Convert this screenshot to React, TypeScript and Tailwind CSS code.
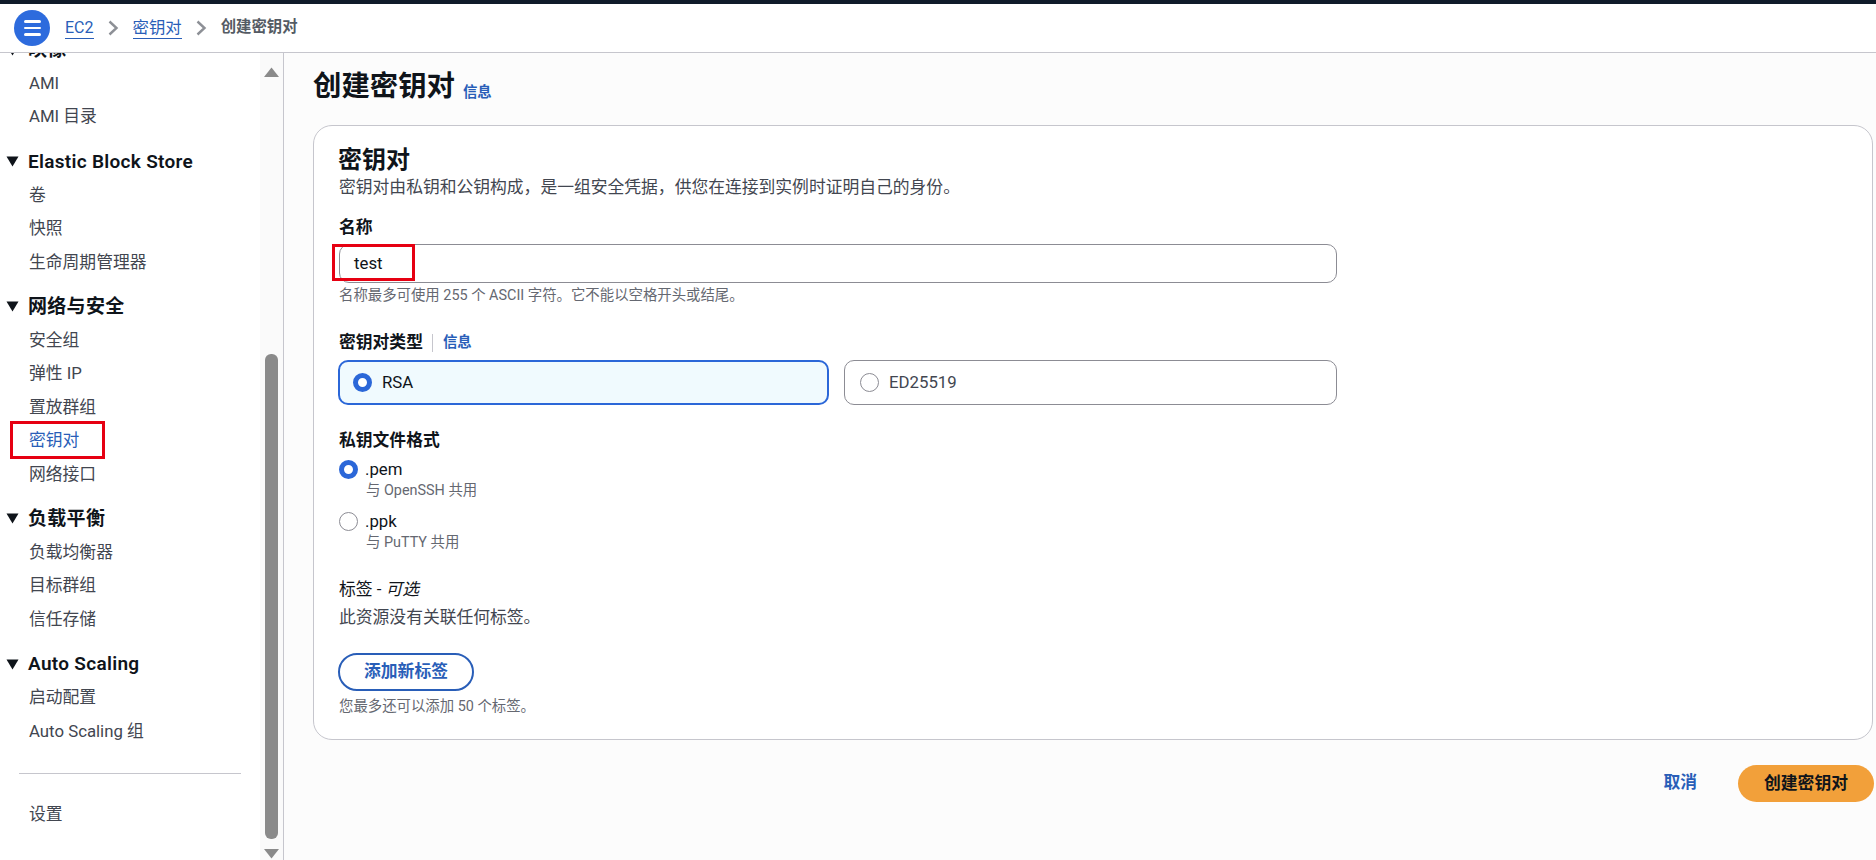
const FONT = "font-['Roboto','Noto_Sans_CJK_SC',sans-serif]";

type NavGroup = { title?: string; items: string[] };

const NAV_GROUPS: NavGroup[] = [
  { title: "Elastic Block Store", items: ["卷", "快照", "生命周期管理器"] },
  { title: "网络与安全", items: ["安全组", "弹性 IP", "置放群组", "密钥对", "网络接口"] },
  { title: "负载平衡", items: ["负载均衡器", "目标群组", "信任存储"] },
  { title: "Auto Scaling", items: ["启动配置", "Auto Scaling 组"] },
];

function Caret() {
  return (
    <svg width="13" height="11" viewBox="0 0 13 11" className="shrink-0 text-[#0f141a]">
      <path d="M0.5 0.5h12L6.5 10.5z" fill="currentColor" />
    </svg>
  );
}

function Chevron() {
  return (
    <svg width="12" height="18" viewBox="0 0 12 18" className="shrink-0 text-[#8d9096]">
      <path d="M2.5 2.5l7 6.5-7 6.5" fill="none" stroke="currentColor" strokeWidth="2.4" />
    </svg>
  );
}

function NavItem({ label }: { label: string }) {
  const active = label === "密钥对";
  return (
    <li className={`relative flex h-[33.4px] items-center pl-[29px] text-[16.8px] ${active ? "text-[#295eb8]" : "text-[#424650]"}`}>
      {label}
      {active && <span className="absolute left-[10px] top-[-3px] h-[38px] w-[95px] border-[3px] border-[#e60012]" />}
    </li>
  );
}

function Sidebar() {
  return (
    <aside className="flex h-full w-[284px] shrink-0 border-r border-[#c6c6cd] bg-white">
      <nav className="h-full w-[260px] shrink-0 overflow-hidden">
        <div className="-mt-[19px]">
          <div className="flex h-[33px] items-center gap-[9px] pl-[6px] text-[19px] font-semibold tracking-[0.3px] text-[#0f141a]">
            <Caret />
            映像
          </div>
          <ul>
            <NavItem label="AMI" />
            <NavItem label="AMI 目录" />
          </ul>
          {NAV_GROUPS.map((group) => (
            <div key={group.title} className="mt-[11px]">
              <div className="flex h-[34px] items-center gap-[9px] pl-[6px] text-[19px] font-semibold tracking-[0.3px] text-[#0f141a]">
                <Caret />
                {group.title}
              </div>
              <ul>
                {group.items.map((item) => (
                  <NavItem key={item} label={item} />
                ))}
              </ul>
            </div>
          ))}
          <div className="ml-[19px] mt-[25px] h-px w-[222px] bg-[#c6c6cd]" />
          <div className="mt-[24px] pl-[29px] text-[16.8px] leading-[33px] text-[#424650]">设置</div>
        </div>
      </nav>
      <div className="flex h-full w-[23px] flex-col items-center bg-[#fafafa]">
        <svg width="15" height="10" viewBox="0 0 15 10" className="mt-[14px] text-[#8a8a8a]">
          <path d="M7.5 0.5L15 10H0z" fill="currentColor" />
        </svg>
        <div className="mt-[277px] h-[485px] w-[13px] rounded-[6px] bg-[#8a8a8a]" />
        <svg width="15" height="10" viewBox="0 0 15 10" className="mt-[10px] text-[#8a8a8a]">
          <path d="M0 0h15L7.5 9.5z" fill="currentColor" />
        </svg>
      </div>
    </aside>
  );
}

function Radio({ checked }: { checked?: boolean }) {
  return (
    <span
      className={`block h-[19px] w-[19px] shrink-0 rounded-full bg-white ${
        checked ? "border-[5px] border-[#2b67d8]" : "border-[1.5px] border-[#8c8c94]"
      }`}
    />
  );
}

function Header() {
  return (
    <header className="flex h-[49px] shrink-0 items-center border-b border-[#c6c6cd] bg-white pl-[14px]">
      <button type="button" className="flex h-9 w-9 flex-col items-center justify-center gap-[4px] rounded-full bg-[#2d6bdd]">
        <span className="h-[2.5px] w-[17px] rounded bg-white" />
        <span className="h-[2.5px] w-[17px] rounded bg-white" />
        <span className="h-[2.5px] w-[17px] rounded bg-white" />
      </button>
      <a className="ml-[15px] border-b border-[#295eb8] text-[16px] leading-[21px] text-[#295eb8]">EC2</a>
      <span className="ml-[13px] mr-[14px]"><Chevron /></span>
      <a className="border-b border-[#295eb8] text-[16.4px] leading-[21px] text-[#295eb8]">密钥对</a>
      <span className="ml-[13px] mr-[14px]"><Chevron /></span>
      <span className="text-[15.4px] font-semibold text-[#545b64]">创建密钥对</span>
    </header>
  );
}

function KeyForm() {
  return (
    <section className="mt-[12px] h-[615px] w-[1560px] rounded-[19px] border border-[#c6c6cd] bg-white pl-[25px] pt-[20px]">
      <h2 className="ml-[-1px] text-[24px] font-bold leading-[28px] text-[#0f141a]">密钥对</h2>
      <p className="mt-[2px] text-[16.8px] leading-[22px] text-[#424650]">密钥对由私钥和公钥构成，是一组安全凭据，供您在连接到实例时证明自己的身份。</p>

      <label className="mt-[18px] block text-[16.8px] font-semibold leading-[22px] text-[#0f141a]">名称</label>
      <div className="relative mt-[6px] h-[39px] w-[998px]">
        <div className="flex h-full items-center rounded-[10px] border border-[#8c8c94] bg-white pl-[14px] text-[16.8px] text-[#0f141a]">test</div>
        <span className="absolute left-[-7px] top-0 h-[37px] w-[83px] border-[3px] border-[#e60012]" />
      </div>
      <p className="mt-[3px] text-[14.4px] leading-[20px] text-[#656871]">名称最多可使用 255 个 ASCII 字符。它不能以空格开头或结尾。</p>

      <div className="mt-[26px] flex h-[22px] items-center text-[14.4px]">
        <span className="text-[16.8px] font-semibold text-[#0f141a]">密钥对类型</span>
        <span className="ml-[9px] h-[18px] w-px bg-[#c6c6cd]" />
        <a className="ml-[10px] font-semibold text-[#295eb8]">信息</a>
      </div>
      <div className="ml-[-1px] mt-[6px] flex w-[999px] gap-[15px]">
        <div className="flex h-[45px] w-[491px] items-center gap-[10px] rounded-[10px] border-[2px] border-[#2b67d8] bg-[#f0fafe] pl-[13px] text-[16.8px] text-[#0f141a]">
          <Radio checked />
          RSA
        </div>
        <div className="flex h-[45px] flex-1 items-center gap-[10px] rounded-[10px] border border-[#8c8c94] bg-white pl-[15px] text-[16.8px] text-[#424650]">
          <Radio />
          ED25519
        </div>
      </div>

      <div className="mt-[24px] text-[16.8px] font-semibold leading-[22px] text-[#0f141a]">私钥文件格式</div>
      <div className="mt-[7px] flex items-center gap-[7px] text-[16.8px] leading-[22px] text-[#0f141a]">
        <Radio checked />
        .pem
      </div>
      <div className="pl-[27px] text-[14.4px] leading-[21px] text-[#656871]">与 OpenSSH 共用</div>
      <div className="mt-[9px] flex items-center gap-[7px] text-[16.8px] leading-[22px] text-[#0f141a]">
        <Radio />
        .ppk
      </div>
      <div className="pl-[27px] text-[14.4px] leading-[21px] text-[#656871]">与 PuTTY 共用</div>

      <div className="mt-[25px] text-[16.8px] leading-[22px] text-[#0f141a]">标签 - <i>可选</i></div>
      <p className="mt-[6px] text-[16.8px] leading-[22px] text-[#424650]">此资源没有关联任何标签。</p>
      <button type="button" className="ml-[-1px] mt-[25px] flex h-[38px] w-[136px] items-center justify-center rounded-full border-[2px] border-[#295eb8] bg-white text-[16.8px] font-semibold text-[#295eb8]">添加新标签</button>
      <p className="mt-[6px] text-[14.4px] leading-[20px] text-[#656871]">您最多还可以添加 50 个标签。</p>
    </section>
  );
}

export default function App() {
  return (
    <div className={`flex h-[860px] w-[1876px] flex-col overflow-hidden bg-[#fcfcfc] ${FONT}`}>
      <div className="h-[4px] shrink-0 bg-[#0f1b2a]" />
      <Header />
      <div className="flex min-h-0 flex-1">
        <Sidebar />
        <main className="flex-1 pl-[29px]">
          <div className="flex h-[60px] items-center pt-[8px]">
            <h1 className="text-[28.4px] font-bold text-[#0f141a]">创建密钥对</h1>
            <a className="ml-[8px] mt-[12px] text-[14.4px] font-semibold text-[#295eb8]">信息</a>
          </div>
          <KeyForm />
          <div className="mt-[25px] flex w-[1561px] items-center justify-end">
            <a className="mb-[2px] text-[16.8px] font-semibold text-[#295eb8]">取消</a>
            <button type="button" className="ml-[41px] h-[37px] w-[136px] rounded-full bg-[#f2a03a] text-[16.8px] font-semibold text-[#0f141a]">创建密钥对</button>
          </div>
        </main>
      </div>
    </div>
  );
}
